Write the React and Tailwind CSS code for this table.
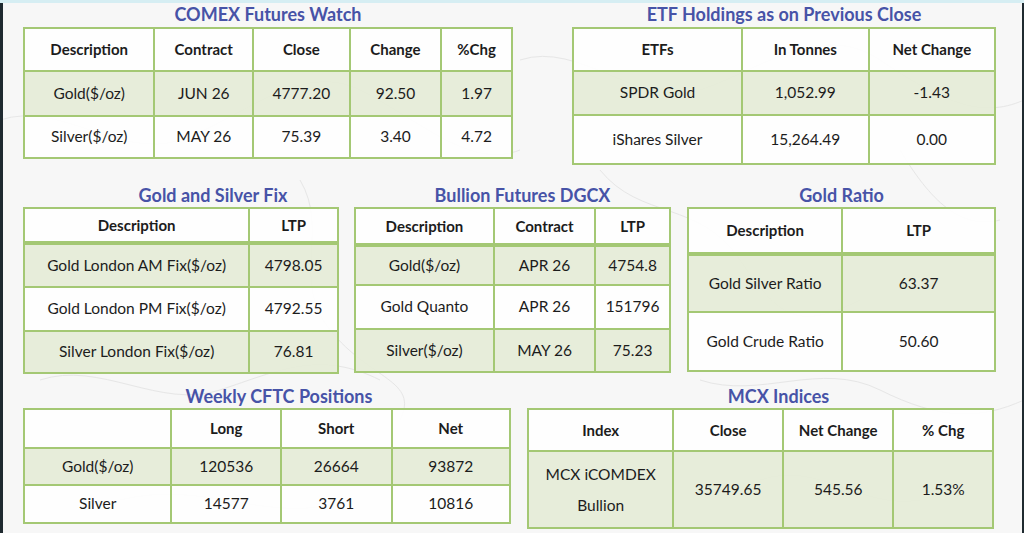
import React from "react";

const FONT = { fontFamily: "Lato, 'Open Sans', Arial, sans-serif" };

function DataTable({ title, titleClass = "items-center", cols, rows, head, tint = [1], thickHead = false, titleH = 25 }) {
  return (
    <div className="flex flex-col items-stretch">
      <div
        className={"flex justify-center text-[18px] font-bold text-[#4753a7] leading-[20px] " + titleClass}
        style={{ height: titleH }}
      >
        {title}
      </div>
      <table className="table-fixed border-collapse border-2 border-[#a4c874] text-[15.5px] text-[#1c1c1c]">
        <colgroup>
          {cols.map((w, i) => (
            <col key={i} style={{ width: w }} />
          ))}
        </colgroup>
        <tbody>
          <tr style={{ height: rows[0] }} className="bg-white/90">
            {head.map((h, i) => (
              <th
                key={i}
                className={
                  "border-2 border-[#a4c874] font-bold text-[15px] text-center px-1 " +
                  (thickHead ? "border-b-[4px]" : "")
                }
              >
                {h}
              </th>
            ))}
          </tr>
          {rows.slice(1).map((r, ri) => (
            <tr
              key={ri}
              style={{ height: r.h }}
              className={tint.includes(ri + 1) ? "bg-[#e6ecd8]/95" : "bg-white/90"}
            >
              {r.cells.map((c, ci) => (
                <td key={ci} className="border-2 border-[#a4c874] text-center px-1">
                  {c}
                </td>
              ))}
            </tr>
          ))}
        </tbody>
      </table>
    </div>
  );
}

function Marble() {
  return (
    <svg className="absolute inset-0 pointer-events-none" width="1024" height="533" viewBox="0 0 1024 533">
      <g fill="none" stroke="#dcdcdc" strokeWidth="1" opacity="0.6">
        <path d="M0 120 C60 100 120 160 180 140 S300 60 360 90 S470 170 520 150" />
        <path d="M520 60 C580 40 640 110 700 90 S820 20 880 60 S980 120 1024 100" />
        <path d="M600 170 C640 220 700 200 740 260 S800 330 860 300" />
        <path d="M300 180 C330 230 290 280 330 330 S420 380 400 420" />
        <path d="M40 380 C100 360 160 410 220 390 S320 350 380 380" />
        <path d="M700 380 C760 400 820 360 880 390 S980 420 1024 400" />
        <path d="M900 150 C930 200 960 230 1000 220" />
        <path d="M120 500 C200 480 260 520 330 505" />
        <path d="M760 480 C820 460 860 510 920 500" />
      </g>
    </svg>
  );
}

export default function App() {
  return (
    <div className="relative w-[1024px] h-[533px] overflow-hidden bg-[#f7f7f7]" style={FONT}>
      <Marble />
      <div className="relative flex flex-col h-full">
        <div className="h-[3px] bg-[#d6eef3]" />
        <div className="flex-1 flex flex-col border-l-[3px] border-r-[2px] border-[#1f2a30] pl-[20px]">
          <div className="flex items-start gap-[59px]">
            <div className="w-[490px]">
              <DataTable
                title="COMEX Futures Watch"
                titleH={24}
                titleClass="items-start pt-[1px]"
                cols={[131, 99, 97, 92, 71]}
                head={["Description", "Contract", "Close", "Change", "%Chg"]}
                rows={[
                  43,
                  { h: 45, cells: ["Gold($/oz)", "JUN 26", "4777.20", "92.50", "1.97"] },
                  { h: 42, cells: ["Silver($/oz)", "MAY 26", "75.39", "3.40", "4.72"] },
                ]}
              />
            </div>
            <div className="w-[424px]">
              <DataTable
                title="ETF Holdings as on Previous Close"
                titleH={24}
                titleClass="items-start pt-[1px]"
                cols={[170, 127, 127]}
                head={["ETFs", "In Tonnes", "Net Change"]}
                rows={[
                  43,
                  { h: 44, cells: ["SPDR Gold", "1,052.99", "-1.43"] },
                  { h: 49, cells: ["iShares Silver", "15,264.49", "0.00"] },
                ]}
              />
            </div>
          </div>

          <div className="flex items-start gap-[15px] mt-[17px]">
            <div className="w-[316px]">
              <DataTable
                title="Gold and Silver Fix"
                titleClass="items-center pl-[64px]"
                cols={[227, 89]}
                head={["Description", "LTP"]}
                tint={[1, 3]}
                thickHead
                rows={[
                  35,
                  { h: 44, cells: ["Gold London AM Fix($/oz)", "4798.05"] },
                  { h: 44, cells: ["Gold London PM Fix($/oz)", "4792.55"] },
                  { h: 42, cells: ["Silver London Fix($/oz)", "76.81"] },
                ]}
              />
            </div>
            <div className="w-[317px]">
              <DataTable
                title="Bullion Futures DGCX"
                titleClass="items-center pl-[20px]"
                cols={[140, 102, 75]}
                head={["Description", "Contract", "LTP"]}
                tint={[1, 3]}
                thickHead
                rows={[
                  37,
                  { h: 40, cells: ["Gold($/oz)", "APR 26", "4754.8"] },
                  { h: 44, cells: ["Gold Quanto", "APR 26", "151796"] },
                  { h: 43, cells: ["Silver($/oz)", "MAY 26", "75.23"] },
                ]}
              />
            </div>
            <div className="w-[309px] ml-[1px]">
              <DataTable
                title="Gold Ratio"
                cols={[155, 154]}
                head={["Description", "LTP"]}
                thickHead
                rows={[
                  46,
                  { h: 58, cells: ["Gold Silver Ratio", "63.37"] },
                  { h: 59, cells: ["Gold Crude Ratio", "50.60"] },
                ]}
              />
            </div>
          </div>

          <div className="flex items-start gap-[16px] mt-[9px]">
            <div className="w-[488px]">
              <DataTable
                title="Weekly CFTC Positions"
                titleClass="items-center pl-[24px]"
                cols={[148, 110, 111, 119]}
                head={["", "Long", "Short", "Net"]}
                rows={[
                  39,
                  { h: 37, cells: ["Gold($/oz)", "120536", "26664", "93872"] },
                  { h: 38, cells: ["Silver", "14577", "3761", "10816"] },
                ]}
              />
            </div>
            <div className="w-[467px]">
              <DataTable
                title="MCX Indices"
                titleClass="items-center pl-[36px]"
                cols={[146, 110, 111, 100]}
                head={["Index", "Close", "Net Change", "% Chg"]}
                rows={[
                  42,
                  {
                    h: 77,
                    cells: [
                      <span className="block leading-[31px]">
                        MCX iCOMDEX
                        <br />
                        Bullion
                      </span>,
                      "35749.65",
                      "545.56",
                      "1.53%",
                    ],
                  },
                ]}
              />
            </div>
          </div>
        </div>
      </div>
    </div>
  );
}
